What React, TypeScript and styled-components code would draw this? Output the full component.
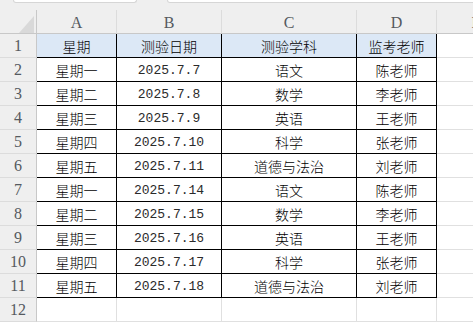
import React from "react";
import styled, { createGlobalStyle, css } from "styled-components";

const GlobalStyle = createGlobalStyle`
  html, body { margin: 0; padding: 0; background: #ffffff; overflow: hidden; }
  #root { width: 473px; height: 326px; overflow: hidden; }
`;

const Page = styled.div`
  width: 473px;
  height: 326px;
  overflow: hidden;
  background: #ffffff;
`;

const TopStrip = styled.div`
  height: 10px;
  background: #efefef;
  display: flex;
  align-items: flex-start;
  overflow: hidden;
`;

const BarBox = styled.div<{ $left: number; $width: number }>`
  margin-left: ${(p) => p.$left}px;
  width: ${(p) => p.$width}px;
  flex: none;
  height: 2px;
  background: #ffffff;
  border: 1px solid #d6d6d6;
  border-top: none;
  border-radius: 0 0 4px 4px;
`;

const Sheet = styled.div`
  display: grid;
  grid-template-columns: 37px 80px 105px 135px 80px 80px;
  grid-auto-rows: 24px;
  width: 517px;
`;

const Corner = styled.div`
  background: #efefef;
  border-right: 1px solid #c8c8c8;
  border-bottom: 1px solid #c8c8c8;
  box-sizing: border-box;
  display: flex;
  justify-content: flex-end;
  align-items: flex-end;
  padding-right: 2px;
`;

const HeaderText = css`
  font-family: "Liberation Serif", "DejaVu Serif", serif;
  font-size: 16px;
  color: #555a60;
  box-sizing: border-box;
  background: #efefef;
  display: flex;
  align-items: center;
  justify-content: center;
`;

const ColHeader = styled.div`
  ${HeaderText};
  border-right: 1px solid #dcdcdc;
  border-bottom: 1px solid #c8c8c8;
  padding-top: 3px;
`;

const RowHeader = styled.div`
  ${HeaderText};
  border-right: 1px solid #c8c8c8;
  border-bottom: 1px solid #dcdcdc;
  padding-top: 1px;
`;

const Cell = styled.div<{ $inTable?: boolean; $head?: boolean; $mono?: boolean }>`
  box-sizing: border-box;
  display: flex;
  align-items: center;
  justify-content: center;
  white-space: nowrap;
  color: ${(p) => (p.$mono ? "#2a2a2a" : "#000000")};
  background: ${(p) => (p.$head ? "#dce8f6" : "#ffffff")};
  border-right: 1px solid ${(p) => (p.$inTable ? "#000000" : "#e0e0e0")};
  border-bottom: 1px solid ${(p) => (p.$inTable ? "#000000" : "#e0e0e0")};
  font-family: ${(p) =>
    p.$mono
      ? '"Liberation Mono", "DejaVu Sans Mono", monospace'
      : '"Noto Sans CJK SC", "Noto Sans", sans-serif'};
  font-weight: ${(p) => (p.$mono ? 400 : 300)};
  font-size: ${(p) => (p.$mono ? "13px" : "14px")};
  padding-top: 1px;
`;

const columns = ["A", "B", "C", "D", "E"];

const rows: string[][] = [
  ["星期", "测验日期", "测验学科", "监考老师"],
  ["星期一", "2025.7.7", "语文", "陈老师"],
  ["星期二", "2025.7.8", "数学", "李老师"],
  ["星期三", "2025.7.9", "英语", "王老师"],
  ["星期四", "2025.7.10", "科学", "张老师"],
  ["星期五", "2025.7.11", "道德与法治", "刘老师"],
  ["星期一", "2025.7.14", "语文", "陈老师"],
  ["星期二", "2025.7.15", "数学", "李老师"],
  ["星期三", "2025.7.16", "英语", "王老师"],
  ["星期四", "2025.7.17", "科学", "张老师"],
  ["星期五", "2025.7.18", "道德与法治", "刘老师"],
  ["", "", "", ""],
];

export default function App() {
  return (
    <Page>
      <GlobalStyle />
      <TopStrip>
        <BarBox $left={13} $width={122} />
        <BarBox $left={30} $width={320} />
      </TopStrip>
      <Sheet>
        <Corner>
          <svg width="15" height="17" viewBox="0 0 15 17">
            <polygon points="15,0 15,17 0,17" fill="#d9d9d9" />
          </svg>
        </Corner>
        {columns.map((c) => (
          <ColHeader key={c}>{c}</ColHeader>
        ))}
        {rows.map((r, i) => (
          <React.Fragment key={i}>
            <RowHeader>{i + 1}</RowHeader>
            {r.map((v, j) => (
              <Cell
                key={j}
                $inTable={i < 11}
                $head={i === 0}
                $mono={j === 1 && i > 0}
              >
                {v}
              </Cell>
            ))}
            <Cell />
          </React.Fragment>
        ))}
      </Sheet>
    </Page>
  );
}
